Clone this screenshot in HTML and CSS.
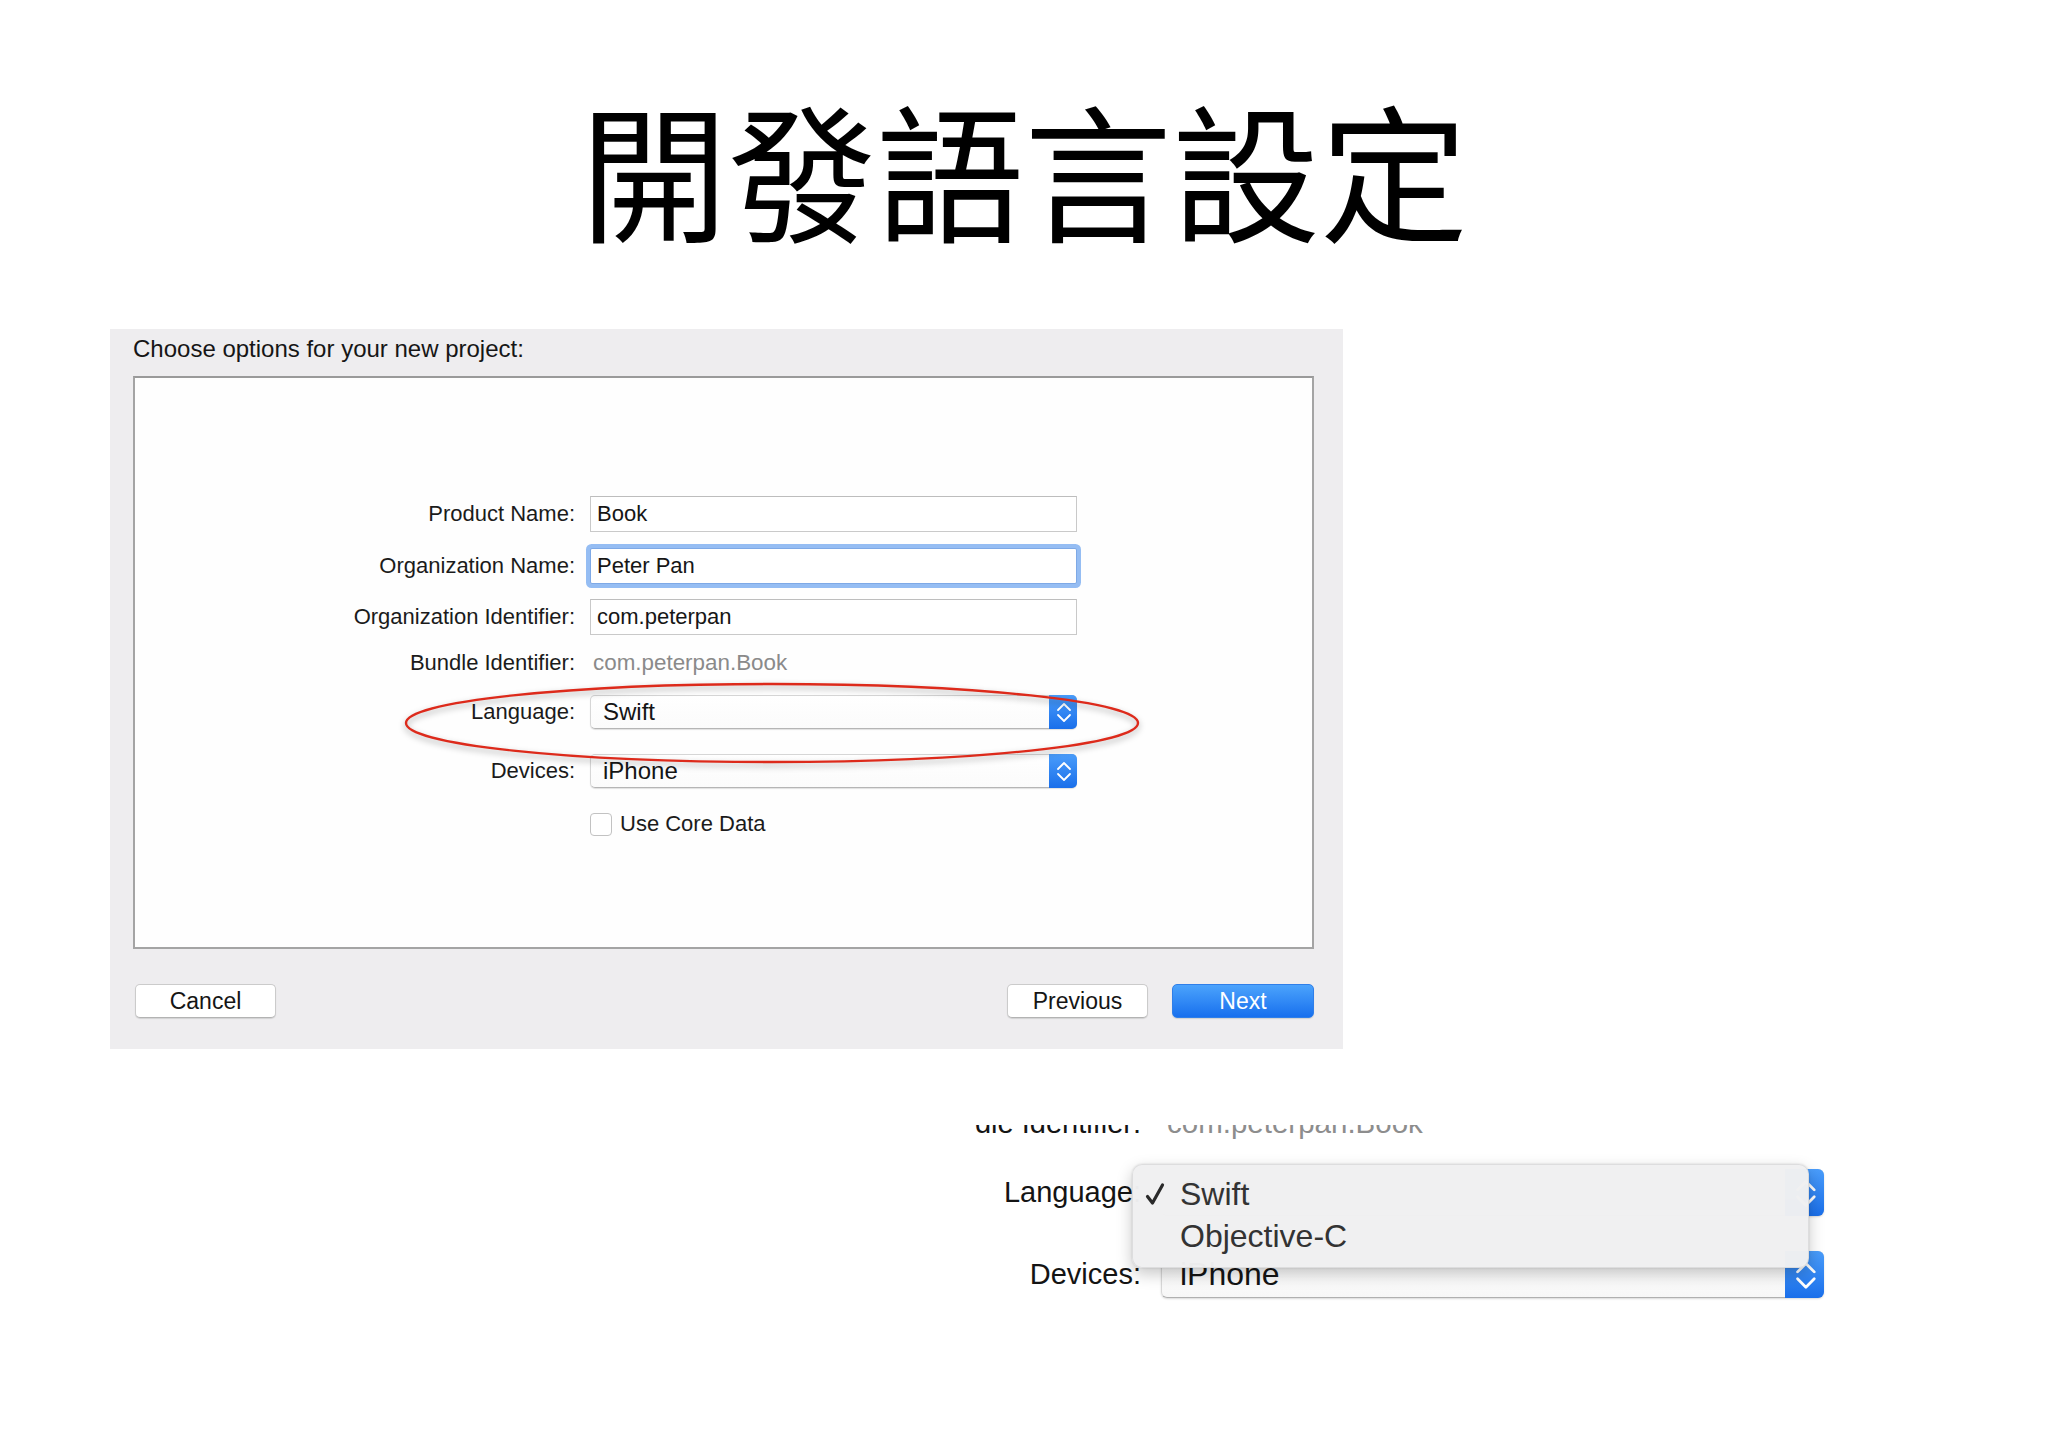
FILE: index.html
```html
<!DOCTYPE html>
<html lang="zh-Hant">
<head>
<meta charset="utf-8">
<title>開發語言設定</title>
<link rel="stylesheet" href="styles.css">
</head>
<body>
<h1 class="title">開發語言設定</h1>

<section class="dialog">
  <div class="dialog-heading">Choose options for your new project:</div>
  <div class="options-box">
    <div class="form">
      <div class="row row-product">
        <span class="lbl">Product Name:</span>
        <div class="field">Book</div>
      </div>
      <div class="row row-orgname">
        <span class="lbl">Organization Name:</span>
        <div class="field focused">Peter Pan</div>
      </div>
      <div class="row row-orgid">
        <span class="lbl">Organization Identifier:</span>
        <div class="field">com.peterpan</div>
      </div>
      <div class="row row-bundle">
        <span class="lbl">Bundle Identifier:</span>
        <div class="static">com.peterpan.Book</div>
      </div>
      <div class="row row-language">
        <span class="lbl">Language:</span>
        <div class="popup">
          <span class="popup-text">Swift</span>
          <span class="stepper"><svg viewBox="0 0 28 34" preserveAspectRatio="none"><polyline points="9,15 15,9 21,15"/><polyline points="9,20 15,26 21,20"/></svg></span>
        </div>
      </div>
      <div class="row row-devices">
        <span class="lbl">Devices:</span>
        <div class="popup">
          <span class="popup-text">iPhone</span>
          <span class="stepper"><svg viewBox="0 0 28 34" preserveAspectRatio="none"><polyline points="9,15 15,9 21,15"/><polyline points="9,20 15,26 21,20"/></svg></span>
        </div>
      </div>
      <div class="row row-check">
        <span class="lbl"></span>
        <label class="check"><span class="box"></span><span>Use Core Data</span></label>
      </div>
    </div>
    <svg class="ellipse" viewBox="0 0 760 110" width="760" height="110">
      <ellipse cx="377" cy="50" rx="366" ry="39"/>
    </svg>
  </div>
  <div class="buttons">
    <button class="btn">Cancel</button>
    <span class="spacer"></span>
    <button class="btn">Previous</button>
    <button class="btn primary">Next</button>
  </div>
</section>

<section class="zoomshot">
  <div class="zrow zrow-bundle">
    <span class="zlbl"><span>Bundle Identifier:</span></span>
    <span class="zstatic">com.peterpan.Book</span>
  </div>
  <div class="zrow zrow-language">
    <span class="zlbl"><span>Language:</span></span>
    <div class="zpopup">
      <span class="zpopup-text">Swift</span>
      <span class="zstepper"><svg viewBox="0 0 28 34" preserveAspectRatio="none"><polyline points="9,15 15,9 21,15"/><polyline points="9,20 15,26 21,20"/></svg></span>
    </div>
  </div>
  <div class="zrow zrow-devices">
    <span class="zlbl"><span>Devices:</span></span>
    <div class="zpopup">
      <span class="zpopup-text">iPhone</span>
      <span class="zstepper"><svg viewBox="0 0 28 34" preserveAspectRatio="none"><polyline points="9,15 15,9 21,15"/><polyline points="9,20 15,26 21,20"/></svg></span>
    </div>
  </div>
  <div class="menu">
    <div class="menu-item"><span class="mark"><svg viewBox="0 0 20 24" width="20" height="24"><path d="M2.5 14.5 L7.5 21 L17.5 3"/></svg></span><span>Swift</span></div>
    <div class="menu-item"><span class="mark"></span><span>Objective-C</span></div>
  </div>
</section>
</body>
</html>
```

FILE: styles.css
```css
html, body {
  margin: 0;
  padding: 0;
  background: #ffffff;
}

body {
  width: 2048px;
  min-height: 1447px;
  font-family: "Liberation Sans", Arial, "Noto Sans CJK TC", sans-serif;
  color: #1b1b1b;
  overflow: hidden;
}

.title {
  margin: 0;
  padding-top: 93px;
  font-family: "Noto Sans CJK TC", "Noto Sans CJK SC", sans-serif;
  font-weight: 400;
  font-size: 148px;
  line-height: 148px;
  text-align: center;
  color: #000;
}

/* ---------- dialog ---------- */
.dialog {
  margin: 88px 0 0 110px;
  width: 1233px;
  height: 720px;
  box-sizing: border-box;
  background: #eeedef;
  padding: 6px 29px 0 23px;
}

.dialog-heading {
  font-size: 24px;
  line-height: 28px;
  color: #161616;
}

.options-box {
  position: relative;
  margin-top: 13px;
  height: 573px;
  box-sizing: border-box;
  background: #fefefe;
  border: 2px solid #a4a4a4;
  border-top-color: #9a9a9a;
}

.form {
  padding-top: 118px;
  display: flex;
  flex-direction: column;
}

.row {
  display: grid;
  grid-template-columns: 440px 487px;
  column-gap: 15px;
  align-items: center;
  height: 36px;
}

.row-orgname { margin-top: 16px; }
.row-orgid { margin-top: 15px; }
.row-bundle { margin-top: 10px; }
.row-language { margin-top: 14px; height: 34px; }
.row-devices { margin-top: 25px; height: 34px; }
.row-check { margin-top: 18px; }

.lbl {
  text-align: right;
  font-size: 22px;
  color: #1b1b1b;
  white-space: nowrap;
}

.field {
  height: 36px;
  box-sizing: border-box;
  border: 1px solid #c9c9c9;
  border-top-color: #bdbdbd;
  background: #fff;
  font-size: 22px;
  line-height: 34px;
  padding-left: 6px;
  color: #161616;
}

.field.focused {
  border-color: #7ea9e6;
  border-radius: 2px;
  box-shadow: 0 0 0 4px #95bdf3;
}

.static {
  font-size: 22.4px;
  color: #8a8a8a;
  padding-left: 3px;
}

.popup {
  height: 34px;
  box-sizing: border-box;
  display: flex;
  align-items: stretch;
  background: linear-gradient(#ffffff, #fbfbfb);
  border: 1px solid #d6d6d6;
  border-bottom-color: #b5b5b5;
  border-radius: 5px;
  box-shadow: 0 1px 1px rgba(0, 0, 0, 0.12);
}

.popup-text {
  flex: 1;
  font-size: 24px;
  line-height: 32px;
  padding-left: 12px;
  color: #151515;
}

.stepper {
  width: 28px;
  margin: -1px -1px -1px 0;
  border-radius: 0 5px 5px 0;
  background: linear-gradient(#4a9dfb, #1a6fea);
  display: flex;
}

.stepper svg,
.zstepper svg {
  width: 100%;
  height: 100%;
  fill: none;
  stroke: #ffffff;
  stroke-width: 1.8;
  stroke-linecap: round;
  stroke-linejoin: round;
}

.check {
  display: flex;
  align-items: center;
  gap: 8px;
  font-size: 22px;
  color: #1b1b1b;
}

.check .box {
  width: 22px;
  height: 23px;
  box-sizing: border-box;
  border: 1.5px solid #c2c2c2;
  border-radius: 4px;
  background: #fff;
}

.ellipse {
  position: absolute;
  left: 260px;
  top: 295px;
  overflow: visible;
  filter: drop-shadow(0 3px 3px rgba(0, 0, 0, 0.35));
}

.ellipse ellipse {
  fill: none;
  stroke: #dd2a1b;
  stroke-width: 2.4;
}

.buttons {
  margin-top: 35px;
  display: flex;
  align-items: center;
  gap: 24px;
}

.spacer { flex: 1; }

.btn {
  width: 141px;
  height: 34px;
  box-sizing: border-box;
  border: 1px solid #cbcbcb;
  border-bottom-color: #b3b3b3;
  border-radius: 5px;
  background: #ffffff;
  box-shadow: 0 1px 1px rgba(0, 0, 0, 0.12);
  font-family: "Liberation Sans", Arial, sans-serif;
  font-size: 23px;
  color: #151515;
  padding: 0;
}

.btn:first-child { margin-left: 2px; }

.btn.primary {
  width: 142px;
  color: #ffffff;
  border-color: #2f7fe9;
  background: linear-gradient(#4ba3fc, #1870ee);
}

/* ---------- zoomed screenshot ---------- */
.zoomshot {
  position: relative;
  margin: 76px 0 0 974px;
  width: 880px;
  height: 182px;
  overflow: hidden;
}

.zrow {
  display: grid;
  grid-template-columns: 167px 663px;
  column-gap: 20px;
  align-items: center;
  height: 46px;
}

.zrow-bundle { margin-top: -25px; }
.zrow-language { margin-top: 23px; height: 47px; }
.zrow-devices { margin-top: 35px; }

.zlbl {
  display: flex;
  justify-content: flex-end;
  font-size: 29px;
  white-space: nowrap;
  color: #141414;
}

.zlbl span { flex: none; }

.zstatic {
  font-size: 29.5px;
  color: #8d8d8d;
  padding-left: 6px;
  white-space: nowrap;
}

.zpopup {
  height: 100%;
  box-sizing: border-box;
  display: flex;
  align-items: stretch;
  background: linear-gradient(#ffffff, #f7f7f7);
  border: 1px solid #d8d8d8;
  border-bottom-color: #b0b0b0;
  border-radius: 6px;
  box-shadow: 0 1px 2px rgba(0, 0, 0, 0.15);
}

.zpopup-text {
  flex: 1;
  font-size: 32px;
  line-height: 44px;
  padding-left: 18px;
  color: #141414;
}

.zstepper {
  width: 39px;
  margin: -1px -1px -1px 0;
  border-radius: 0 6px 6px 0;
  background: linear-gradient(#4a9dfb, #1a6fea);
  display: flex;
}

.zstepper svg { stroke-width: 2; }

.menu {
  position: absolute;
  left: 158px;
  top: 39px;
  width: 677px;
  height: 104px;
  box-sizing: border-box;
  padding-top: 8px;
  background: rgba(240, 240, 241, 0.98);
  border: 1px solid rgba(0, 0, 0, 0.08);
  border-radius: 10px;
  box-shadow: 0 6px 16px rgba(0, 0, 0, 0.22), 0 0 2px rgba(0, 0, 0, 0.15);
}

.menu-item {
  display: flex;
  align-items: center;
  height: 42px;
  font-size: 32px;
  color: #333333;
}

.mark {
  width: 35px;
  padding-left: 12px;
  display: flex;
  align-items: center;
}

.mark svg {
  fill: none;
  stroke: #2a2a2a;
  stroke-width: 3.2;
  stroke-linecap: round;
  stroke-linejoin: round;
}
```
